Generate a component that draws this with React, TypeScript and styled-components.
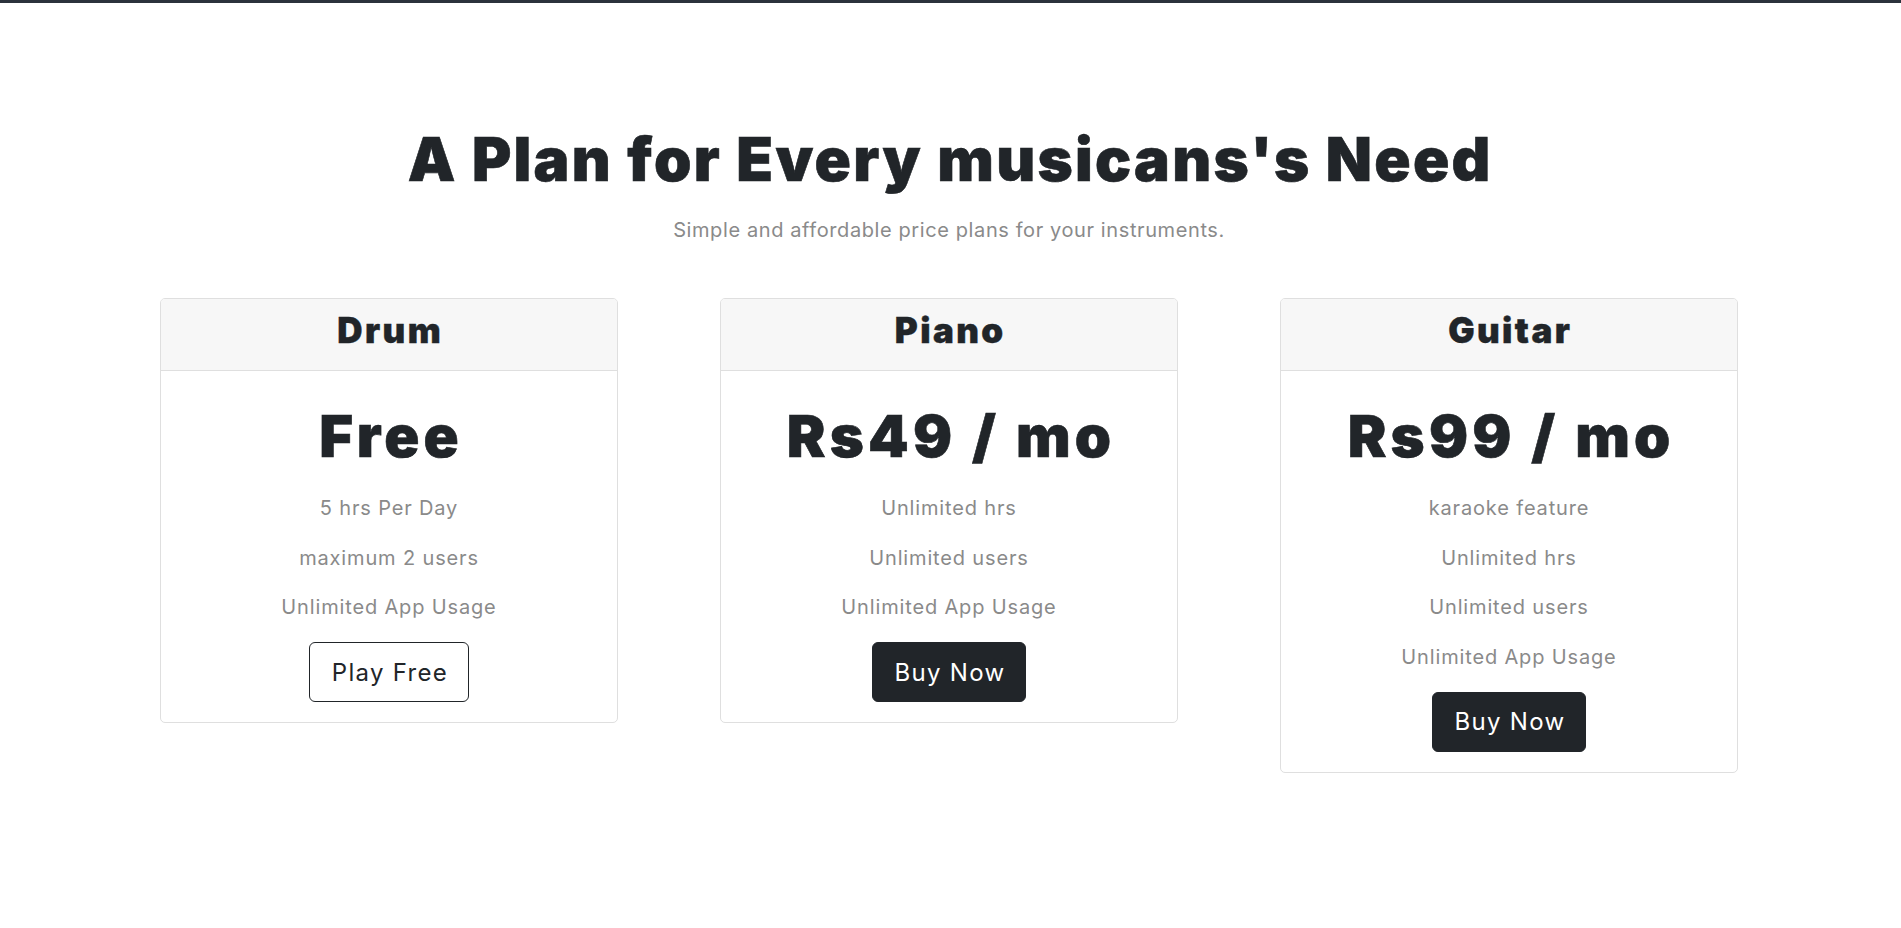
import React from "react";
import styled, { createGlobalStyle } from "styled-components";

const GlobalStyle = createGlobalStyle`
  html, body {
    margin: 0;
    padding: 0;
    background: #ffffff;
  }
  body {
    font-family: Inter, "Noto Sans", "Liberation Sans", sans-serif;
    color: #212529;
  }
  * { box-sizing: border-box; }
`;

const TopBar = styled.div`
  height: 3px;
  background: #2b323c;
`;

const Section = styled.section`
  padding: 120px 3px 80px 0;
  display: flex;
  flex-direction: column;
  align-items: center;
`;

const Title = styled.h1`
  margin: 0;
  font-size: 60px;
  line-height: 72px;
  font-weight: 900;
  letter-spacing: 2.3px;
  text-indent: 2.3px;
  -webkit-text-stroke: 0.6px #212529;
  color: #212529;
  text-align: center;
`;

const Subtitle = styled.p`
  margin: 20px 0 0;
  font-size: 20px;
  line-height: 30px;
  font-weight: 400;
  letter-spacing: 0.6px;
  color: #8a8a8a;
  text-align: center;
`;

const Grid = styled.div`
  margin-top: 53px;
  display: grid;
  grid-template-columns: repeat(3, 458px);
  column-gap: 102px;
  align-items: start;
  justify-content: center;
`;

const Card = styled.div`
  border: 1px solid #dfdfdf;
  border-radius: 5px;
  overflow: hidden;
  background: #fff;
`;

const CardHeader = styled.div`
  background: #f7f7f7;
  border-bottom: 1px solid #dfdfdf;
  padding: 9px 0 18px;
  text-align: center;
`;

const PlanName = styled.h4`
  margin: 0;
  font-size: 35px;
  line-height: 44px;
  font-weight: 900;
  letter-spacing: 2.4px;
  text-indent: 2.4px;
  -webkit-text-stroke: 0.4px #212529;
  color: #212529;
`;

const CardBody = styled.div`
  padding: 30px 20px 20px;
  display: flex;
  flex-direction: column;
  align-items: center;
`;

const Price = styled.h2`
  margin: 0 0 22px;
  font-size: 58px;
  line-height: 70px;
  font-weight: 900;
  letter-spacing: 4.2px;
  text-indent: 4.2px;
  -webkit-text-stroke: 0.6px #212529;
  color: #212529;
  text-align: center;
`;

const Features = styled.ul`
  list-style: none;
  margin: 0 0 20px;
  padding: 0;
  display: flex;
  flex-direction: column;
  gap: 19.6px;
  align-items: center;
`;

const Feature = styled.li`
  font-size: 20px;
  line-height: 30px;
  letter-spacing: 0.85px;
  color: #8a8a8a;
`;

const Button = styled.button<{ $variant: "outline" | "solid" }>`
  height: 60px;
  padding: 0 20px 0 22px;
  font-family: inherit;
  font-size: 24px;
  font-weight: 400;
  letter-spacing: 1.3px;
  border-radius: 6px;
  border: 1px solid #212529;
  background: ${(p) => (p.$variant === "solid" ? "#212529" : "#ffffff")};
  color: ${(p) => (p.$variant === "solid" ? "#ffffff" : "#212529")};
  cursor: pointer;
`;

type Plan = {
  name: string;
  price: string;
  features: string[];
  cta: string;
  variant: "outline" | "solid";
};

const plans: Plan[] = [
  {
    name: "Drum",
    price: "Free",
    features: ["5 hrs Per Day", "maximum 2 users", "Unlimited App Usage"],
    cta: "Play Free",
    variant: "outline",
  },
  {
    name: "Piano",
    price: "Rs49 / mo",
    features: ["Unlimited hrs", "Unlimited users", "Unlimited App Usage"],
    cta: "Buy Now",
    variant: "solid",
  },
  {
    name: "Guitar",
    price: "Rs99 / mo",
    features: ["karaoke feature", "Unlimited hrs", "Unlimited users", "Unlimited App Usage"],
    cta: "Buy Now",
    variant: "solid",
  },
];

export default function App() {
  return (
    <>
      <GlobalStyle />
      <TopBar />
      <Section>
        <Title>A Plan for Every musicans's Need</Title>
        <Subtitle>Simple and affordable price plans for your instruments.</Subtitle>
        <Grid>
          {plans.map((p) => (
            <Card key={p.name}>
              <CardHeader>
                <PlanName>{p.name}</PlanName>
              </CardHeader>
              <CardBody>
                <Price>{p.price}</Price>
                <Features>
                  {p.features.map((f) => (
                    <Feature key={f}>{f}</Feature>
                  ))}
                </Features>
                <Button $variant={p.variant}>{p.cta}</Button>
              </CardBody>
            </Card>
          ))}
        </Grid>
      </Section>
    </>
  );
}
